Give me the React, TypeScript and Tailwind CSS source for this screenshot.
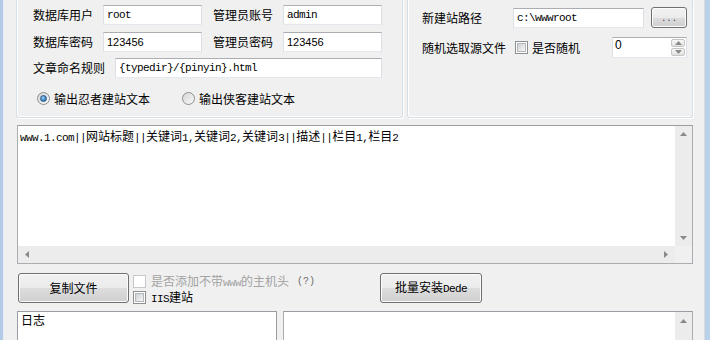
import type { ReactNode } from "react";

const cjk = /([\u3000-\u9fff\uff00-\uffef]+)/;

// ASCII in a narrow mono face, Chinese at full size, like the old 宋体 mix
function Mixed({ text }: { text: string }) {
  return (
    <>
      {text
        .split(cjk)
        .filter(Boolean)
        .map((part, i) =>
          cjk.test(part) ? (
            <span key={i} className="font-['Noto_Sans_CJK_SC',sans-serif] text-[12px]">
              {part}
            </span>
          ) : (
            <span
              key={i}
              className="font-['Liberation_Mono','Noto_Sans_CJK_SC',monospace] text-[11px] tracking-[-0.6px]"
            >
              {part}
            </span>
          )
        )}
    </>
  );
}

function TextBox({ className, children }: { className: string; children?: ReactNode }) {
  return (
    <div
      className={`flex shrink-0 items-center border border-[#abadb3] border-x-[#dbdfe6] border-b-[#e3e9ef] bg-white pl-[3px] leading-[14px] ${className}`}
    >
      {children}
    </div>
  );
}

function Label({ w, children }: { w: string; children: ReactNode }) {
  return <span className={`shrink-0 whitespace-nowrap ${w}`}>{children}</span>;
}

function Radio({ checked }: { checked?: boolean }) {
  return (
    <span className="flex h-[13px] w-[13px] shrink-0 items-center justify-center rounded-full border border-[#8e8f8f] bg-[linear-gradient(135deg,#d4d4d4,#fafafa)]">
      {checked && (
        <span className="h-[7px] w-[7px] rounded-full border border-[#2a5c8a] bg-[radial-gradient(circle_at_40%_35%,#a7d2f5,#3c82c3_60%,#1d5389)]" />
      )}
    </span>
  );
}

function Check({ disabled }: { disabled?: boolean }) {
  return (
    <span
      className={`flex h-[13px] w-[13px] shrink-0 items-center justify-center border bg-white ${
        disabled ? "border-[#c8c8c8]" : "border-[#8e8f8f]"
      }`}
    >
      {!disabled && (
        <span className="h-[9px] w-[9px] border border-[#b4b7bb] bg-[linear-gradient(135deg,#cdd0d4,#f7f7f7)]" />
      )}
    </span>
  );
}

function Button({ className, children }: { className: string; children: ReactNode }) {
  return (
    <div
      className={`flex shrink-0 items-center justify-center rounded-[3px] border border-[#707070] bg-[linear-gradient(#f2f2f2_0%,#ebebeb_50%,#dddddd_51%,#cfcfcf_100%)] shadow-[inset_0_0_0_1px_#fbfbfb] ${className}`}
    >
      {children}
    </div>
  );
}

function Arrow({ dir }: { dir: "up" | "down" | "left" | "right" }) {
  const pts = {
    up: "0,4 7,4 3.5,0",
    down: "0,0 7,0 3.5,4",
    left: "4,0 4,7 0,3.5",
    right: "0,0 0,7 4,3.5",
  }[dir];
  const horiz = dir === "left" || dir === "right";
  return (
    <svg width={horiz ? 4 : 7} height={horiz ? 7 : 4} viewBox={horiz ? "0 0 4 7" : "0 0 7 4"}>
      <polygon points={pts} fill="#8a8a8a" />
    </svg>
  );
}

function GroupBox({ className, children }: { className: string; children: ReactNode }) {
  return (
    <div
      className={`flex shrink-0 flex-col rounded-b-[3px] border border-t-0 border-[#d5dfe5] shadow-[1px_1px_0_#ffffff,inset_1px_-1px_0_#ffffff] ${className}`}
    >
      {children}
    </div>
  );
}

export default function App() {
  return (
    <div className="flex h-[340px] w-[710px] overflow-hidden bg-[#f0f0f0] font-['Noto_Sans_CJK_SC',sans-serif] text-[12px] leading-[14px] text-black">
      <div className="w-[3px] shrink-0 bg-[#b3cbe6]" />
      <div className="w-[1px] shrink-0 bg-[#e6edf5]" />

      <main className="flex min-w-0 flex-1 flex-col pl-[12px] pr-[11px]">
        <div className="flex h-[118px] shrink-0 gap-[4px]">
          <GroupBox className="w-[387px] pl-[16px] pt-[5px]">
            <div className="flex h-[20px] items-center">
              <Label w="w-[70px]">数据库用户</Label>
              <TextBox className="h-[20px] w-[99px]">
                <Mixed text="root" />
              </TextBox>
              <Label w="ml-[11px] w-[70px]">管理员账号</Label>
              <TextBox className="h-[20px] w-[99px]">
                <Mixed text="admin" />
              </TextBox>
            </div>
            <div className="mt-[7px] flex h-[20px] items-center">
              <Label w="w-[70px]">数据库密码</Label>
              <TextBox className="h-[20px] w-[99px] font-['Liberation_Sans',sans-serif] text-[11px]">123456</TextBox>
              <Label w="ml-[11px] w-[70px]">管理员密码</Label>
              <TextBox className="h-[20px] w-[99px] font-['Liberation_Sans',sans-serif] text-[11px]">123456</TextBox>
            </div>
            <div className="mt-[6px] flex h-[20px] items-center">
              <Label w="w-[82px]">文章命名规则</Label>
              <TextBox className="h-[20px] w-[267px]">
                <Mixed text="{typedir}/{pinyin}.html" />
              </TextBox>
            </div>
            <div className="ml-[4px] mt-[14px] flex h-[13px] items-center">
              <Radio checked />
              <span className="ml-[4px] w-[128px] whitespace-nowrap">输出忍者建站文本</span>
              <Radio />
              <span className="ml-[4px] whitespace-nowrap">输出侠客建站文本</span>
            </div>
          </GroupBox>

          <GroupBox className="flex-1 pl-[14px] pt-[7px]">
            <div className="flex h-[21px] items-center">
              <Label w="w-[91px]">新建站路径</Label>
              <TextBox className="h-[20px] w-[131px]">
                <Mixed text="c:\wwwroot" />
              </TextBox>
              <Button className="ml-[7px] h-[21px] w-[36px]">
                <span className="pt-[3px] font-['Liberation_Mono',monospace] text-[9px] text-[#444]">...</span>
              </Button>
            </div>
            <div className="mt-[9px] flex h-[21px] items-center">
              <Label w="w-[93px]">随机选取源文件</Label>
              <Check />
              <span className="ml-[4px] w-[48px] whitespace-nowrap">是否随机</span>
              <div className="ml-[32px] flex h-[21px] w-[75px] items-stretch border border-[#abadb3] border-x-[#dbdfe6] border-b-[#e3e9ef] bg-white">
                <span className="flex-1 pl-[2px] pt-[1px] font-['Liberation_Sans',sans-serif] text-[12px] leading-[13px]">
                  0
                </span>
                <div className="my-[1px] mr-[1px] flex w-[14px] flex-col gap-[1px]">
                  <div className="flex flex-1 items-center justify-center rounded-[2px] border border-[#c5c5c5] bg-[linear-gradient(#f7f7f7,#e2e2e2)]">
                    <Arrow dir="up" />
                  </div>
                  <div className="flex flex-1 items-center justify-center rounded-[2px] border border-[#c5c5c5] bg-[linear-gradient(#f7f7f7,#e2e2e2)]">
                    <Arrow dir="down" />
                  </div>
                </div>
              </div>
            </div>
          </GroupBox>
        </div>

        <div className="ml-[1px] mt-[7px] flex h-[139px] shrink-0 flex-col border border-[#abadb3] border-t-[#9a9da4] bg-white">
          <div className="flex min-h-0 flex-1">
            <div className="flex-1 whitespace-nowrap pl-[2px] pt-[3px] leading-[14px]">
              <Mixed text="www.1.com||网站标题||关键词1,关键词2,关键词3||描述||栏目1,栏目2" />
            </div>
            <div className="flex w-[17px] flex-col items-center justify-between bg-[#ececec] py-[6px]">
              <Arrow dir="up" />
              <Arrow dir="down" />
            </div>
          </div>
          <div className="flex h-[17px] shrink-0">
            <div className="flex flex-1 items-center justify-between bg-[#ececec] px-[7px]">
              <Arrow dir="left" />
              <Arrow dir="right" />
            </div>
            <div className="w-[17px] bg-[#f0f0f0]" />
          </div>
        </div>

        <div className="mt-[9px] flex h-[30px] shrink-0">
          <Button className="ml-[2px] h-[30px] w-[111px]">复制文件</Button>
          <div className="ml-[4px] flex w-[247px] flex-col gap-[3px] pt-[2px]">
            <div className="flex h-[13px] items-center">
              <Check disabled />
              <span className="ml-[5px] whitespace-nowrap text-[#a3a3a3]">
                <Mixed text="是否添加不带www的主机头" />
              </span>
              <span className="ml-[8px] font-['Liberation_Mono',monospace] text-[10px] text-[#6d6d6d]">(?)</span>
            </div>
            <div className="flex h-[13px] items-center">
              <Check />
              <span className="ml-[5px] whitespace-nowrap">
                <Mixed text="IIS建站" />
              </span>
            </div>
          </div>
          <Button className="h-[30px] w-[102px]">
            <span className="leading-[14px]">
              <Mixed text="批量安装Dede" />
            </span>
          </Button>
        </div>

        <div className="mt-[8px] flex h-[40px] shrink-0 gap-[6px]">
          <div className="ml-[1px] w-[260px] border border-[#9a9da4] bg-white pl-[3px] pt-[1px]">日志</div>
          <div className="flex flex-1 border border-[#abadb3] border-t-[#9a9da4] bg-white">
            <div className="flex-1" />
            <div className="flex w-[17px] flex-col items-center bg-[#ececec] pt-[7px]">
              <Arrow dir="up" />
            </div>
          </div>
        </div>
      </main>

      <div className="w-[1px] shrink-0 bg-[#dcdcdc]" />
      <div className="w-[5px] shrink-0 bg-[#b9d1ea]" />
    </div>
  );
}
